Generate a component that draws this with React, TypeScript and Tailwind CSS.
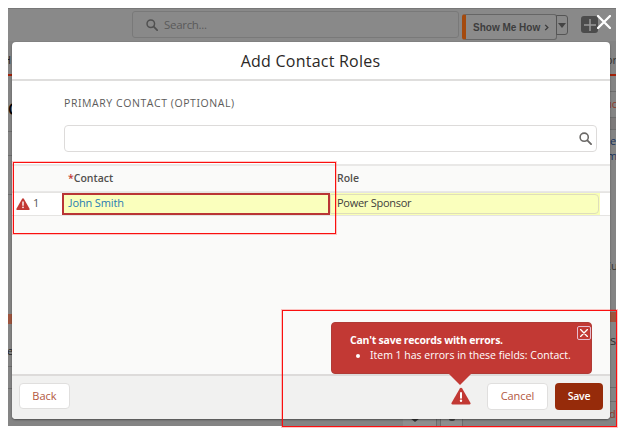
import React from "react";

const SearchIcon = ({ className }: { className: string }) => (
  <svg viewBox="0 0 14 14" className={className} fill="none" stroke="currentColor">
    <circle cx="5.6" cy="5.6" r="4.4" strokeWidth="1.7" />
    <path d="M9 9 13 13" strokeWidth="2" strokeLinecap="round" />
  </svg>
);

const WarningIcon = ({ className }: { className: string }) => (
  <svg viewBox="0 0 20 17" className={className}>
    <path d="M10 0.3c.5 0 .9.3 1.2.8l8.2 14.2c.5.9 0 1.6-.9 1.6h-17c-.9 0-1.4-.7-.9-1.6L8.8 1.1c.3-.5.7-.8 1.2-.8Z" fill="#c23934" />
    <path d="M10 5.6v4.6" stroke="#fff" strokeWidth="2" strokeLinecap="round" />
    <circle cx="10" cy="13.3" r="1.2" fill="#fff" />
  </svg>
);

const CloseIcon = ({ className }: { className: string }) => (
  <svg viewBox="0 0 14 14" className={className} fill="none" stroke="currentColor" strokeWidth="2.3">
    <path d="M1 1 13 13M13 1 1 13" strokeLinecap="round" />
  </svg>
);

function LeftSliver() {
  return (
    <div className="flex w-[5px] flex-col overflow-hidden whitespace-nowrap text-[#222]">
      <div className="mt-[11px] flex h-[16px] items-center text-[11px]"><span className="-ml-[5px]">H</span></div>
      <div className="mt-[6px] h-[2px] shrink-0 bg-[#a32108]" />
      <div className="mt-[23px] flex h-[20px] items-center text-[16px] font-semibold text-black">C</div>
      <div className="mt-[12px] h-px shrink-0 bg-[#6d6d6d]" />
      <div className="mt-[23px] h-px shrink-0 bg-[#6d6d6d]" />
      <div className="mt-[38px] h-px shrink-0 bg-[#6d6d6d]" />
      <div className="mt-[119px] h-[10px] shrink-0 bg-[#9d543e]" />
      <div className="mt-[19px] flex h-[16px] items-center text-[11px]"><span className="-ml-px">e</span></div>
      <div className="mt-[7px] h-px shrink-0 bg-[#6d6d6d]" />
      <div className="mt-[21px] h-px shrink-0 bg-[#6d6d6d]" />
    </div>
  );
}

function RightSliver() {
  return (
    <div className="ml-auto flex w-[6px] flex-col overflow-hidden whitespace-nowrap text-[11px] text-[#333]">
      <div className="mt-[11px] flex h-[16px] items-center"><span className="-ml-[4px]">or</span></div>
      <div className="mt-[6px] h-[2px] shrink-0 bg-[#a32108]" />
      <div className="mt-[15px] h-px shrink-0 bg-[#6d6d6d]" />
      <div className="mt-[4px] flex h-[16px] items-center text-[#8c3c2c]"><span className="-ml-[5px]">uc</span></div>
      <div className="mt-[5px] flex h-[13px] shrink-0 border-y border-[#6d6d6d] bg-[#7d7a7a]" />
      <div className="mt-[4px] flex h-[15px] items-center text-[#16325c]">e</div>
      <div className="flex h-[15px] items-center text-[#16325c]"><span className="-ml-[3px]">m</span></div>
      <div className="mt-[94px] flex h-[16px] items-center"><span className="-ml-[6px]">Cu</span></div>
      <div className="mt-[38px] h-[10px] shrink-0 bg-[#9d543e]" />
      <div className="mt-[11px] flex h-[16px] items-center text-[13px]">s</div>
      <div className="mt-[38px] h-px shrink-0 bg-[#6d6d6d]" />
      <div className="mt-[13px] h-px shrink-0 bg-[#6d6d6d]" />
      <div className="mt-[4px] flex h-[16px] items-center text-[#8c3c2c]"><span className="-ml-px">d</span></div>
    </div>
  );
}

function Backdrop() {
  return (
    <div className="flex h-full flex-col bg-[#848484]">
      <div className="flex h-[33px] shrink-0 items-start border-t border-[#777] bg-[#898989]">
        <div className="ml-[124px] mt-[2px] flex h-[27px] w-[327px] items-center rounded-[3px] border border-[#797979] pl-[13px] text-[#505050]">
          <SearchIcon className="mt-px size-[12px]" />
          <span className="ml-[6px] text-[11.5px] leading-none tracking-[-0.3px] text-[#5a5a5a]">Search...</span>
        </div>
        <div className="ml-[3px] mt-[5px] flex h-[26px] w-[95px] items-center rounded-[3px] border border-l-4 border-[#666] border-l-[#a44a0e] bg-[#8b8b8b] pl-[7px] font-['Liberation_Sans',sans-serif] text-[10px] font-bold text-[#3d3d3d]">
          <span className="whitespace-nowrap">Show Me How</span>
          <svg viewBox="0 0 5 8" className="ml-[4px] mt-px h-[7px] w-[5px]" fill="none" stroke="#3d3d3d" strokeWidth="1.6"><path d="m1 1 3 3-3 3" /></svg>
        </div>
        <div className="-ml-px mt-[6px] flex h-[20px] w-[12px] items-center justify-center rounded-r-[3px] border border-[#555]">
          <svg viewBox="0 0 8 5" className="h-[5px] w-[8px]"><path d="M0 0h8L4 5Z" fill="#444" /></svg>
        </div>
        <div className="ml-[13px] mt-[7px] flex size-[17px] items-center justify-center rounded-[3px] bg-[#4c4c4c]">
          <svg viewBox="0 0 12 12" className="size-[12px]" stroke="#999" strokeWidth="1.5"><path d="M6 0v12M0 6h12" /></svg>
        </div>
      </div>
      <div className="flex min-h-0 flex-1">
        <LeftSliver />
        <div className="ml-[390px] mt-auto flex h-[7px] items-start overflow-hidden">
          <div className="flex h-[8px] w-[34px] justify-center border-r border-[#6d6d6d] bg-[#8e8e8e]">
            <svg viewBox="0 0 10 4" className="-ml-[10px] h-[3px] w-[8px]"><path d="M0 0h10L5 4Z" fill="#333" /></svg>
          </div>
          <div className="ml-[3px] flex h-[8px] w-[23px] justify-center border-x border-[#6d6d6d] bg-[#8e8e8e]">
            <div className="h-[2px] w-[6px] rounded-b bg-[#444]" />
          </div>
        </div>
        <RightSliver />
      </div>
    </div>
  );
}

function Modal() {
  return (
    <section className="flex h-[377px] w-[598px] flex-col overflow-hidden rounded-[4px] bg-white shadow-[0_1px_2px_rgba(0,0,0,0.4)]">
      <header className="flex h-[39px] shrink-0 items-center justify-center border-b-2 border-[#dfdedd]">
        <h1 className="mr-px whitespace-nowrap text-[16px] leading-none tracking-[0.24px] text-[#2b2826]">Add Contact Roles</h1>
      </header>
      <div className="flex h-[83px] shrink-0 flex-col pl-[52px] pr-[13px]">
        <label className="mt-[14px] whitespace-nowrap text-[10.5px] leading-[16px] tracking-[0.57px] text-[#5c5b5a]">PRIMARY CONTACT (OPTIONAL)</label>
        <div className="mt-[14px] flex h-[27px] items-center justify-end rounded-[4px] border border-[#dddbda] pr-[4px] text-[#6b6967]">
          <SearchIcon className="size-[13px]" />
        </div>
      </div>
      <div className="flex h-[28px] shrink-0 items-center border-t-2 border-b border-[#e9e8e7] bg-[#fafaf9] text-[10.5px] font-semibold text-[#514f4d]">
        <div className="w-[325px] pl-[56px]"><span className="text-[#c23934]">*</span>Contact</div>
        <div>Role</div>
      </div>
      <div className="flex h-[24px] shrink-0 items-stretch border-y border-[#e5e4e2] text-[11px]">
        <div className="flex w-[50px] items-center pb-px pl-[4px]">
          <WarningIcon className="h-[12px] w-[14px]" />
          <span className="ml-[3px] text-[#555]">1</span>
        </div>
        <div className="flex w-[268px] items-center border-2 border-[#b93535] bg-[#faffbd] pb-px pl-[4px] tracking-[-0.12px] text-[#267bb3]">John Smith</div>
        <div className="flex w-[270px] items-stretch bg-[#f9ffb5] py-px pr-px">
          <div className="flex flex-1 items-center rounded-r-[4px] border border-[#dfdeba] bg-[#faffbd] pb-px pl-[6px] tracking-[-0.27px] text-[#3e3e3c]">Power Sponsor</div>
        </div>
      </div>
      <div className="flex-1 bg-[#fafaf9]" />
      <footer className="flex h-[45px] shrink-0 items-start border-t-2 border-[#dddbda] bg-[#f1f1f0] pt-[7px] text-[11px]">
        <button className="ml-[7px] flex h-[26px] w-[51px] items-center justify-center rounded-[4px] border border-[#e0dfde] bg-white text-[#b2573e]">Back</button>
        <WarningIcon className="ml-[381px] mt-[4px] h-[18px] w-[20px]" />
        <button className="ml-[16px] flex h-[27px] w-[61px] items-center justify-center rounded-[4px] border border-[#e0dfde] bg-white pb-px tracking-[-0.1px] text-[#b2573e]">Cancel</button>
        <button className="ml-[7px] flex h-[27px] w-[48px] items-center justify-center rounded-[4px] bg-[#962b0a] pt-px text-[10.5px] font-semibold tracking-[-0.3px] text-white">Save</button>
      </footer>
    </section>
  );
}

function ErrorPopover() {
  return (
    <div className="flex flex-col">
      <div className="flex h-[52px] w-[261px] rounded-[4px] border border-[#b03b36] bg-[#c23934] pl-[18px] pt-[3px] text-white">
        <div className="w-[227px] shrink-0 whitespace-nowrap pt-[7px] text-[11px] leading-[15px]">
          <p className="text-[10.5px] font-bold tracking-[-0.24px]">Can't save records with errors.</p>
          <ul className="pl-[6px]">
            <li className="flex items-center">
              <span className="size-[4px] shrink-0 rounded-full bg-white" />
              <span className="ml-[10px] text-[10.5px] font-medium">Item 1 has errors in these fields: Contact.</span>
            </li>
          </ul>
        </div>
        <div className="flex size-[14px] shrink-0 items-center justify-center rounded-[2px] border border-[#e6bdd0]">
          <CloseIcon className="size-[8px]" />
        </div>
      </div>
      <svg viewBox="0 0 24 12" className="-mt-px ml-[117px] h-[12px] w-[24px]"><path d="M0 0h24L12 12Z" fill="#c23934" /></svg>
    </div>
  );
}

export default function App() {
  return (
    <main className="relative h-[437px] w-[624px] overflow-hidden bg-white font-['Open_Sans','Noto_Sans',sans-serif] [font-feature-settings:'ss02','ss01','salt']">
      <div className="h-[426px] px-[8px] pt-[8px]"><Backdrop /></div>
      <div className="absolute left-[12px] top-[42px]"><Modal /></div>
      <CloseIcon className="absolute left-[597px] top-[15px] size-[14px] text-white" />
      <div className="absolute left-[331px] top-[322px]"><ErrorPopover /></div>
      <div className="absolute left-[13px] top-[162px] h-[72px] w-[323px] border border-[#fa0f0f] shadow-[0_0_0_1px_rgba(255,0,0,0.22)]" />
      <div className="absolute left-[282px] top-[310px] h-[117px] w-[335px] border border-[#fa0f0f] shadow-[0_0_0_1px_rgba(255,0,0,0.22)]" />
    </main>
  );
}
